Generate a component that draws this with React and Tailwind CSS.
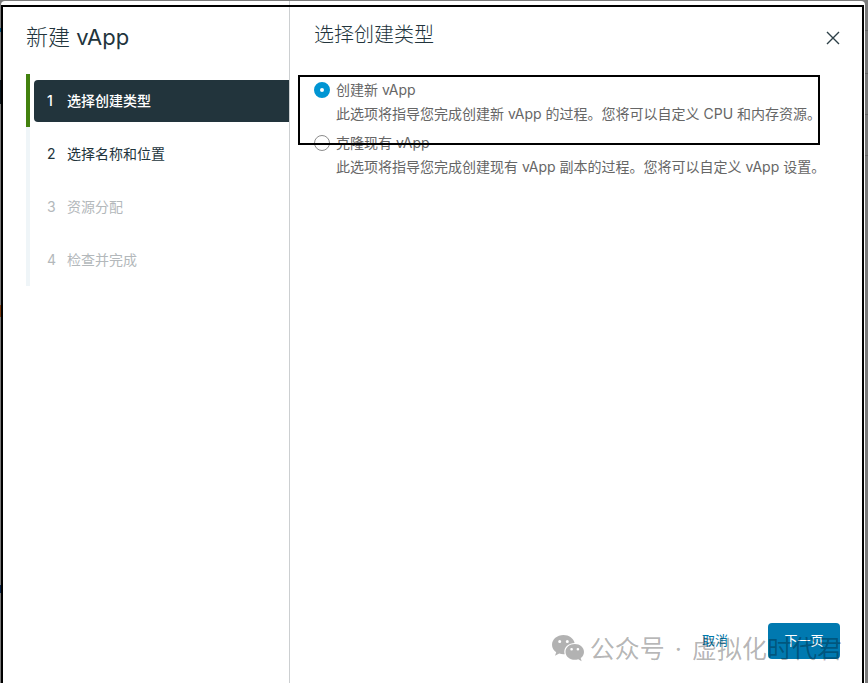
import React, { useState } from "react";

const steps = [
  { id: 1, label: "选择创建类型", state: "active" },
  { id: 2, label: "选择名称和位置", state: "enabled" },
  { id: 3, label: "资源分配", state: "disabled" },
  { id: 4, label: "检查并完成", state: "disabled" },
];

const options = [
  {
    id: "create",
    label: "创建新 vApp",
    text: "此选项将指导您完成创建新 vApp 的过程。您将可以自定义 CPU 和内存资源。",
  },
  {
    id: "clone",
    label: "克隆现有 vApp",
    text: "此选项将指导您完成创建现有 vApp 副本的过程。您将可以自定义 vApp 设置。",
  },
];

const stepStyles = {
  active: "bg-[#22343c] text-white font-medium",
  enabled: "text-[#22343c]",
  disabled: "text-[#b3b8bb]",
};

const Backdrop = () => (
  <div className="absolute inset-0 overflow-hidden bg-[#7b7b7b]">
    <div className="absolute left-0 top-7 h-1 w-1 bg-[#004a70]" />
    <div className="absolute left-0 top-20 h-6 w-1 bg-[#0e171c]" />
    <div className="absolute left-0 top-[305px] h-3 w-1 bg-[#7a3b12]" />
    <div className="absolute left-0 top-[585px] h-2 w-1 bg-[#0b2447]" />
    <div className="absolute right-0 top-[30px] h-[44px] w-1 border-y border-[#666]" />
    <div className="absolute right-0 top-[114px] h-[42px] w-1 border-y border-[#666]" />
  </div>
);

const StepNav = () => (
  <aside className="w-[288px] shrink-0 border-r border-[#cccfd1] pl-6 pt-5">
    <h1 className="text-[22px] leading-8 font-light text-[#22343c]">
      新建 <span className="font-normal">vApp</span>
    </h1>
    <nav className="mt-[21px]">
      <ol>
        {steps.map((step) => (
          <li
            key={step.id}
            className={
              "border-l-4 pb-[5px] pl-1 pt-[6px] " +
              (step.state === "active" ? "border-[#42810e]" : "border-[#eff5f8]")
            }
          >
            <button
              type="button"
              disabled={step.state === "disabled"}
              className={
                "flex h-[42px] w-full items-center rounded-l pl-[13px] text-left text-sm " +
                stepStyles[step.state]
              }
            >
              <span className="w-5">{step.id}</span>
              <span>{step.label}</span>
            </button>
          </li>
        ))}
      </ol>
    </nav>
  </aside>
);

const Watermark = () => (
  <div className="pointer-events-none absolute bottom-4 right-[23px] flex items-center gap-[6px] whitespace-nowrap text-[25px] leading-9 text-black/30">
    <svg width="32" height="28" viewBox="0 0 32 28" fill="currentColor" aria-hidden="true">
      <path
        fillRule="evenodd"
        d="M11.5 0C5.100 0 0 4.300 0 9.700c0 3 1.600 5.700 4.200 7.500L3 20.800l4.200-2.200c1.400.4 2.800.7 4.300.7l1.200-.1c-.3-.8-.4-1.600-.4-2.500 0-4.900 4.700-8.700 10.300-8.700C21.600 3.400 17 0 11.500 0zM7.700 5a1.500 1.500 0 1 1 0 3 1.500 1.500 0 0 1 0-3zm7.600 0a1.500 1.500 0 1 1 0 3 1.500 1.500 0 0 1 0-3z"
      />
      <path
        fillRule="evenodd"
        d="M22.800 9c-5.200 0-9.300 3.500-9.300 7.900s4.100 7.900 9.300 7.900c1.200 0 2.400-.2 3.400-.6l3.400 2-.9-3.100c2-1.500 3.300-3.700 3.300-6.200C32 12.500 28 9 22.800 9zm-3.200 4a1.300 1.300 0 1 1 0 2.600 1.300 1.300 0 0 1 0-2.600zm6.300 0a1.300 1.300 0 1 1 0 2.600 1.300 1.300 0 0 1 0-2.600z"
      />
    </svg>
    <div className="flex gap-[10px]">
      <span>公众号</span>
      <span>·</span>
      <span>虚拟化时代君</span>
    </div>
  </div>
);

const App = () => {
  const [selected, setSelected] = useState("create");

  return (
    <div className="relative flex min-h-screen font-['Inter','Noto_Sans_CJK_SC',sans-serif]">
      <Backdrop />
      <div className="relative ml-px mr-[3px] mt-px flex flex-1 rounded-t bg-white pl-px">
        <StepNav />
        <main className="relative flex min-w-0 flex-1 flex-col pb-6 pl-6 pr-[25px] pt-[18px]">
          <header className="flex items-start justify-between">
            <h2 className="text-xl leading-8 font-light text-[#22343c]">选择创建类型</h2>
            <button type="button" aria-label="关闭" className="mt-3 text-[#2d4048]">
              <svg width="14" height="14" viewBox="0 0 14 14" fill="none" stroke="currentColor" strokeWidth="1.400">
                <path d="M1 1l12 12M13 1L1 13" />
              </svg>
            </button>
          </header>

          <div className="relative mt-[31px]">
            <div className="pointer-events-none absolute -left-4 -top-[7px] z-10 h-[70px] w-[522px] border-2 border-black" />
            {options.map((option) => (
              <div key={option.id} className="mb-[9px] flex gap-[6px] text-sm leading-6 text-[#666]">
                <input
                  type="radio"
                  name="creation-type"
                  id={option.id}
                  checked={selected === option.id}
                  onChange={() => setSelected(option.id)}
                  className="size-4 shrink-0 appearance-none rounded-full border border-[#8c8c8c] bg-white checked:border-[6px] checked:border-[#0095d3]"
                />
                <div className="-mt-1 whitespace-nowrap">
                  <label htmlFor={option.id} className="block">{option.label}</label>
                  <p>{option.text}</p>
                </div>
              </div>
            ))}
          </div>

          <footer className="mt-auto flex items-center justify-end gap-6">
            <button type="button" className="px-4 text-[13px] text-[#0079ad]">取消</button>
            <button type="button" className="h-9 w-[72px] rounded bg-[#0079b0] text-[13px] text-white">
              下一页
            </button>
          </footer>
          <Watermark />
        </main>
      </div>
      <div className="pointer-events-none absolute bottom-0 left-px right-1 top-[5px] border-2 border-b-0 border-black" />
    </div>
  );
};

export default App;
